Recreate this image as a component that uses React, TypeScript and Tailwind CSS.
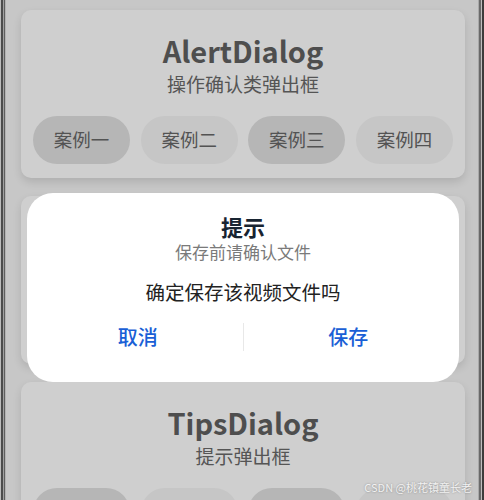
const cases = ['案例一', '案例二', '案例三', '案例四']

const font = { fontFamily: '"Noto Sans CJK SC", "Noto Sans", sans-serif' }

const DemoCard = ({ title, desc }: { title?: string; desc?: string }) => (
  <div className="flex h-[168px] shrink-0 flex-col items-center rounded-[10px] bg-[#cfcfcf] px-[12px] pt-[22px] shadow-[0_4px_8px_rgba(0,0,0,0.12)]">
    {title && (
      <>
        <div className="text-[29px] font-bold leading-[36px] text-[#4e4e4e]">{title}</div>
        <div className="mt-[3px] text-[19px] leading-[26px] text-[#555555]">{desc}</div>
        <div className="mt-[19px] flex w-full justify-between">
          {cases.map((c, i) => (
            <div
              key={c}
              className={
                i % 2 === 0
                  ? 'flex h-[48px] w-[97px] items-center justify-center rounded-full bg-[#b6b6b6] text-[18.5px] text-[#535353]'
                  : 'flex h-[48px] w-[97px] items-center justify-center rounded-full bg-[#c6c6c6] text-[18.5px] text-[#535353]'
              }
            >
              {c}
            </div>
          ))}
        </div>
      </>
    )}
  </div>
)

const App = () => {
  return (
    <div className="relative flex h-[500px] w-[484px] overflow-hidden bg-[#c7c7c7]" style={font}>
      <div className="flex h-full shrink-0">
        <div className="w-px bg-[#bcbcbc]" />
        <div className="w-[2px] bg-[#4c4c4c]" />
        <div className="w-px bg-[#a0a0a0]" />
        <div className="w-px bg-[#5e5e5e]" />
        <div className="w-px bg-[#b2b2b2]" />
      </div>

      <div className="flex flex-1 flex-col gap-[18px] pl-[15px] pr-[13px] pt-[10px]">
        <DemoCard title="AlertDialog" desc="操作确认类弹出框" />
        {/* 被弹出框遮住的卡片 */}
        <DemoCard />
        <DemoCard title="TipsDialog" desc="提示弹出框" />
      </div>

      <div className="flex h-full shrink-0">
        <div className="w-px bg-[#a9a9a9]" />
        <div className="w-[2px] bg-[#6a6a6a]" />
        <div className="w-px bg-[#bfbfbf]" />
        <div className="w-[2px] bg-[#3c3c3c]" />
      </div>

      {/* 弹出框 */}
      <div className="absolute left-[27px] top-[193px] flex h-[189px] w-[432px] flex-col items-center rounded-[26px] bg-white pt-[19px]">
        <div className="text-[22px] font-bold leading-[28px] text-[#182431]">提示</div>
        <div className="text-[17px] leading-[24px] text-[#7a7a7a]">保存前请确认文件</div>
        <div className="mt-[15px] text-[19.5px] leading-[26px] text-[#222222]">确定保存该视频文件吗</div>
        <div className="mt-[12px] flex h-[40px] w-full items-center px-[6px]">
          <div className="flex flex-1 justify-center text-[20px] font-medium text-[#1a5fd6]">取消</div>
          <div className="h-[28px] w-px bg-[#e8e8e8]" />
          <div className="flex flex-1 justify-center text-[20px] font-medium text-[#1a5fd6]">保存</div>
        </div>
      </div>

      <div className="absolute bottom-[5px] right-[12px] text-[11px] text-[#f2f2f2] [text-shadow:0_0_2px_rgba(0,0,0,0.35)]">
        CSDN @桃花镇童长老
      </div>
    </div>
  )
}

export default App
